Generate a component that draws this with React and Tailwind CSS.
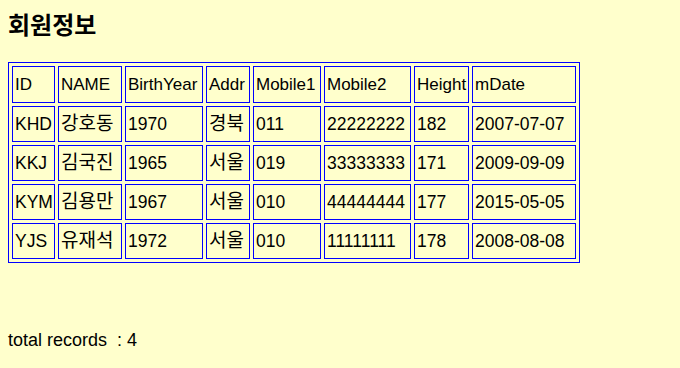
const cols = [
  { name: 'ID', w: 'w-[43px]' },
  { name: 'NAME', w: 'w-[64px]' },
  { name: 'BirthYear', w: 'w-[78px]' },
  { name: 'Addr', w: 'w-[44px]' },
  { name: 'Mobile1', w: 'w-[68px]' },
  { name: 'Mobile2', w: 'w-[87px]' },
  { name: 'Height', w: 'w-[55px]' },
  { name: 'mDate', w: 'w-[104px]' },
];

const members = [
  ['KHD', '강호동', '1970', '경북', '011', '22222222', '182', '2007-07-07'],
  ['KKJ', '김국진', '1965', '서울', '019', '33333333', '171', '2009-09-09'],
  ['KYM', '김용만', '1967', '서울', '010', '44444444', '177', '2015-05-05'],
  ['YJS', '유재석', '1972', '서울', '010', '11111111', '178', '2008-08-08'],
];

// 한글 칸은 조금 크게
const isKorean = (i) => i === 1 || i === 3;

export default function App() {
  return (
    <div
      className="min-h-[368px] w-[680px] bg-[#ffffcc] px-2 text-black"
      style={{ fontFamily: '"Liberation Sans", "Noto Sans CJK KR", sans-serif' }}
    >
      <h3 className="pt-[12px] text-[24px] font-bold leading-[28px]">회원정보</h3>

      <table className="mt-[22px] w-[572px] table-fixed border-separate border-spacing-[3px] border border-[#0000ff]">
        <thead>
          <tr>
            {cols.map((c) => (
              <th
                key={c.name}
                className={`${c.w} h-[37px] overflow-hidden whitespace-nowrap border border-[#0000ff] px-[2px] text-left text-[17px] font-normal`}
              >
                {c.name}
              </th>
            ))}
          </tr>
        </thead>
        <tbody>
          {members.map((row) => (
            <tr key={row[0]}>
              {row.map((v, i) => (
                <td
                  key={i}
                  className={`h-[36px] overflow-hidden whitespace-nowrap border border-[#0000ff] px-[2px] ${
                    isKorean(i) ? 'text-[19px] leading-[24px]' : 'text-[17.5px]'
                  }`}
                >
                  {v}
                </td>
              ))}
            </tr>
          ))}
        </tbody>
      </table>

      <p className="mt-[66px] text-[18px] leading-[22px]">
        total records<span className="ml-[10px]">:</span>
        <span className="ml-[5px]">4</span>
      </p>
    </div>
  );
}
